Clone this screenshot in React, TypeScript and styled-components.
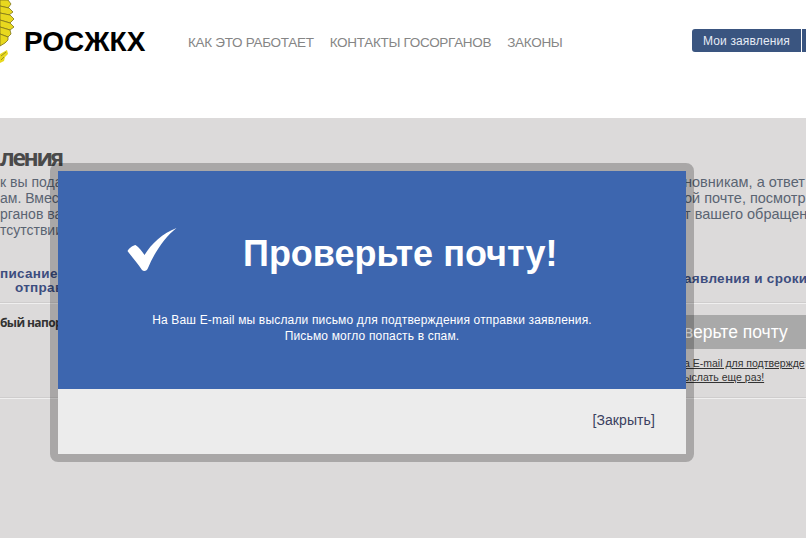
import React from "react";
import styled, { createGlobalStyle } from "styled-components";

const GlobalStyle = createGlobalStyle`
  html, body {
    margin: 0;
    padding: 0;
    background: #dcdada;
  }
  body {
    font-family: "Liberation Sans", Arial, sans-serif;
  }
`;

const Page = styled.div`
  position: relative;
  width: 806px;
  height: 538px;
  overflow: hidden;
  background: #dcdada;
`;

const Header = styled.header`
  height: 118px;
  background: #fff;
  display: flex;
  align-items: flex-start;
`;

const Emblem = styled.svg`
  width: 15px;
  height: 64px;
  flex: none;
`;

const Logo = styled.div`
  flex: none;
  margin: 26px 0 0 9px;
  width: 164px;
  font-size: 28px;
  line-height: 31px;
  font-weight: 700;
  color: #000;
`;

const Nav = styled.nav`
  flex: none;
  display: flex;
  gap: 16px;
  margin-top: 35px;
  width: 504px;
`;

const NavLink = styled.a`
  font-size: 13.5px;
  line-height: 16px;
  color: #858585;
  text-transform: uppercase;
  letter-spacing: -0.3px;
`;

const Buttons = styled.div`
  flex: none;
  display: flex;
  gap: 1px;
  margin-top: 29px;
`;

const Button = styled.a`
  flex: none;
  width: 109px;
  height: 23px;
  line-height: 24px;
  text-align: center;
  font-size: 12px;
  letter-spacing: 0.15px;
  color: #e6ecf5;
  background: #3a5580;
  border-radius: 3px 0 0 3px;
`;

const ButtonRest = styled.div`
  flex: none;
  width: 10px;
  height: 23px;
  background: #3a5580;
`;

const Main = styled.main`
  display: flex;
  flex-direction: column;
`;

const Heading = styled.h1`
  margin: 27px 0 0;
  height: 24px;
  font-family: "Open Sans", sans-serif;
  font-size: 23px;
  line-height: 24px;
  font-weight: 700;
  color: #4a4a4a;
  letter-spacing: -2.4px;
`;

const TwoSides = styled.div<{ $height: number }>`
  display: flex;
  justify-content: space-between;
  height: ${(p) => p.$height}px;
`;

const LeftSide = styled.div`
  width: 58px;
  flex: none;
  white-space: nowrap;
`;

const RightSide = styled.div`
  width: 122px;
  flex: none;
  white-space: nowrap;
`;

const TextLine = styled.div`
  font-size: 14.5px;
  line-height: 16px;
  color: #5a6472;
`;

const LeftText = styled(TextLine)`
  font-size: 14px;
`;

const Intro = styled(TwoSides)`
  margin-top: 5px;
`;

const BoldLine = styled.div<{ $right?: boolean }>`
  font-size: 13.5px;
  line-height: 14px;
  font-weight: 700;
  color: #3c4d7f;
  letter-spacing: 0.3px;
  padding-left: ${(p) => (p.$right ? "15px" : "0")};
`;

const StepLinks = styled(TwoSides)`
  margin-top: 29px;
`;

const RightBold = styled(BoldLine)`
  margin-top: 5px;
`;

const Divider = styled.div<{ $gap: number }>`
  height: 1px;
  margin-top: ${(p) => p.$gap}px;
  background: #f0efef;
  box-shadow: 0 -1px 0 #cfcdcd;
`;

const Status = styled(TwoSides)`
  margin-top: 11px;
`;

const Direct = styled.div`
  font-family: "Open Sans", sans-serif;
  font-size: 12px;
  line-height: 16px;
  font-weight: 700;
  color: #333;
  letter-spacing: -0.6px;
`;

const GreyBand = styled.div`
  height: 34px;
  line-height: 34px;
  font-size: 17.5px;
  color: #fff;
  background: #a9a9a9;
`;

const SmallLink = styled.a`
  display: block;
  font-size: 10.5px;
  line-height: 14px;
  color: #333;
  text-decoration: underline;
`;

const SmallLinks = styled.div`
  margin-top: 7px;
`;

const Modal = styled.div`
  position: absolute;
  left: 50px;
  top: 163px;
  width: 628px;
  border: 8px solid rgba(0, 0, 0, 0.23);
  border-radius: 8px;
  background-clip: padding-box;
`;

const ModalBody = styled.div`
  height: 218px;
  background: #3d66af;
  color: #fff;
  display: flex;
  flex-direction: column;
  align-items: center;
`;

const TitleRow = styled.div`
  display: flex;
  align-items: flex-start;
  width: 100%;
  height: 141px;
`;

const CheckIcon = styled.svg`
  flex: none;
  width: 50px;
  height: 44px;
  margin: 57px 0 0 69px;
`;

const Title = styled.h2`
  margin: 62px 0 0 66px;
  font-size: 36px;
  line-height: 42px;
  font-weight: 700;
  white-space: nowrap;
`;

const Message = styled.p`
  margin: 0;
  font-size: 12px;
  line-height: 16px;
  letter-spacing: 0.17px;
  text-align: center;
`;

const ModalFooter = styled.div`
  height: 61px;
  background: #ececec;
  display: flex;
  justify-content: flex-end;
  align-items: center;
  padding: 0 31px 4px 0;
`;

const CloseLink = styled.a`
  font-size: 14px;
  letter-spacing: 0.1px;
  color: #3a4060;
`;

const feathers = [
  "M0 0 H8 L11 4 L8 8 L0 6 Z",
  "M0 6 L9 8 L13 12 L9 15 L0 13 Z",
  "M0 13 L10 15 L14 19 L10 23 L0 20 Z",
  "M0 20 L10 23 L14 27 L10 30 L0 27 Z",
  "M0 27 L10 30 L11 34 L8 37 L0 34 Z",
  "M0 34 L8 37 L8 40 L5 43 L0 46 Z",
];

function Feathers() {
  return (
    <Emblem viewBox="0 0 15 64" aria-hidden="true">
      {feathers.map((d) => (
        <path key={d} d={d} fill="#e8d81e" stroke="#7d7418" strokeWidth="0.8" />
      ))}
      <path d="M0 54 L7 50 L8 54 L5 57 L4 61 L0 63 Z" fill="#e8d81e" />
      <path d="M1 56 L6 52 M1 60 L4 57" stroke="#7d7418" strokeWidth="0.7" fill="none" />
    </Emblem>
  );
}

export default function App() {
  return (
    <>
      <GlobalStyle />
      <Page>
        <Header>
          <Feathers />
          <Logo>РОСЖКХ</Logo>
          <Nav>
            <NavLink>Как это работает</NavLink>
            <NavLink>Контакты госорганов</NavLink>
            <NavLink>Законы</NavLink>
          </Nav>
          <Buttons>
            <Button>Мои заявления</Button>
            <ButtonRest />
          </Buttons>
        </Header>
        <Main>
          <Heading>ления</Heading>
          <Intro $height={64}>
            <LeftSide>
              <LeftText>к вы подаете</LeftText>
              <LeftText>ам. Вместо</LeftText>
              <LeftText>рганов вам</LeftText>
              <LeftText>тсутствии</LeftText>
            </LeftSide>
            <RightSide>
              <TextLine>новникам, а ответ</TextLine>
              <TextLine>ой почте, посмотр</TextLine>
              <TextLine>т вашего обращен</TextLine>
            </RightSide>
          </Intro>
          <StepLinks $height={28}>
            <LeftSide>
              <BoldLine>писание</BoldLine>
              <BoldLine $right>отправка</BoldLine>
            </LeftSide>
            <RightSide>
              <RightBold>аявления и сроки</RightBold>
            </RightSide>
          </StepLinks>
          <Divider $gap={8} />
          <Status $height={62}>
            <LeftSide>
              <Direct>бый напор</Direct>
            </LeftSide>
            <RightSide>
              <GreyBand>верьте почту</GreyBand>
              <SmallLinks>
                <SmallLink>а E-mail для подтвержде</SmallLink>
                <SmallLink>ыслать еще раз!</SmallLink>
              </SmallLinks>
            </RightSide>
          </Status>
          <Divider $gap={21} />
        </Main>
        <Modal>
          <ModalBody>
            <TitleRow>
              <CheckIcon viewBox="0 0 50 44" aria-hidden="true">
                <path
                  d="M0.5 23 C2 20 6 17.5 8.5 17 C12 19 15 23.5 17.5 27 C24 16 36 5 49.5 0 C38 9 27 25 21 40 C20 43 17 44 15 42 C11 36 5 29 0.5 23 Z"
                  fill="#fff"
                />
              </CheckIcon>
              <Title>Проверьте почту!</Title>
            </TitleRow>
            <Message>
              На Ваш E-mail мы выслали письмо для подтверждения отправки заявления.
              <br />
              Письмо могло попасть в спам.
            </Message>
          </ModalBody>
          <ModalFooter>
            <CloseLink>[Закрыть]</CloseLink>
          </ModalFooter>
        </Modal>
      </Page>
    </>
  );
}
